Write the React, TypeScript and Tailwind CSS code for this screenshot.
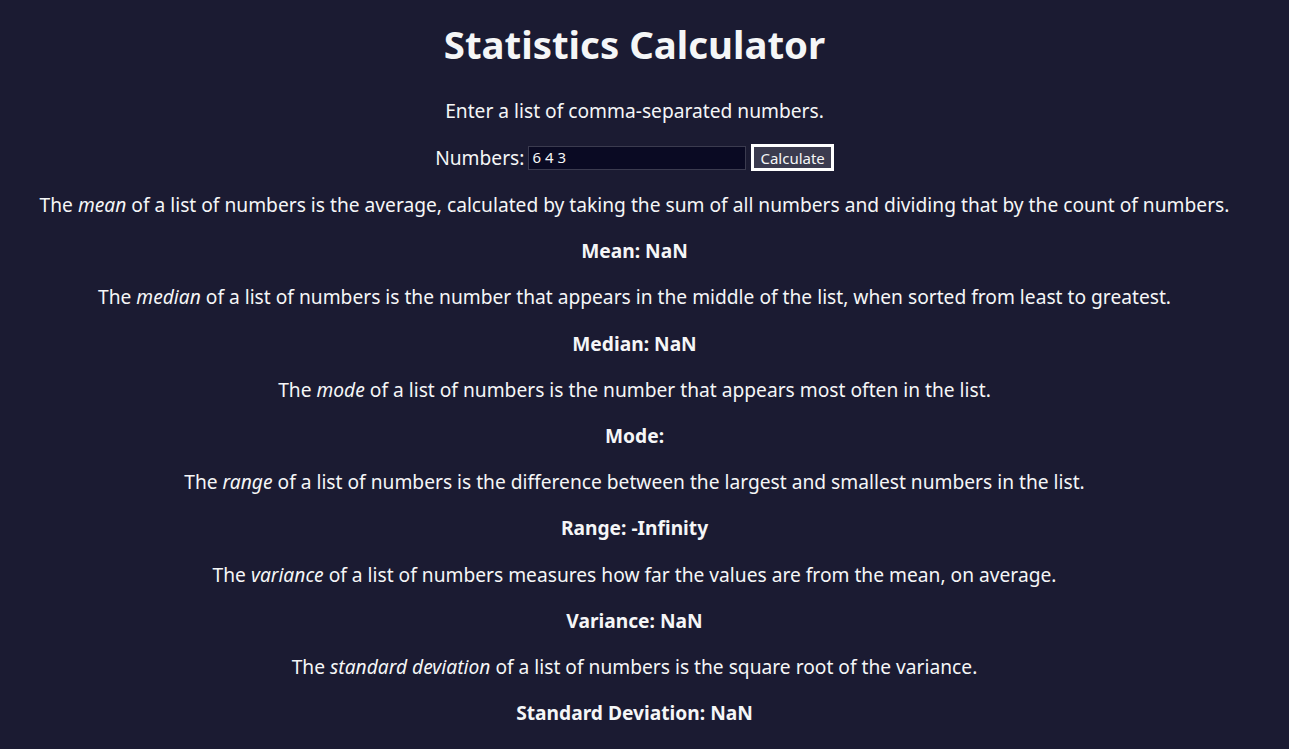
import React, { useState } from 'react';

type Stat = { term: string; before: string; after: string; label: string; value: string };

const STATS: Stat[] = [
  { term: 'mean', before: 'The ', after: ' of a list of numbers is the average, calculated by taking the sum of all numbers and dividing that by the count of numbers.', label: 'Mean', value: 'NaN' },
  { term: 'median', before: 'The ', after: ' of a list of numbers is the number that appears in the middle of the list, when sorted from least to greatest.', label: 'Median', value: 'NaN' },
  { term: 'mode', before: 'The ', after: ' of a list of numbers is the number that appears most often in the list.', label: 'Mode', value: '' },
  { term: 'range', before: 'The ', after: ' of a list of numbers is the difference between the largest and smallest numbers in the list.', label: 'Range', value: '-Infinity' },
  { term: 'variance', before: 'The ', after: ' of a list of numbers measures how far the values are from the mean, on average.', label: 'Variance', value: 'NaN' },
  { term: 'standard deviation', before: 'The ', after: ' of a list of numbers is the square root of the variance.', label: 'Standard Deviation', value: 'NaN' },
];

export default function App() {
  const [nums, setNums] = useState('6 4 3');
  return (
    <div className="min-h-screen pr-[20px] bg-[#1b1b32] text-[#f5f6f7] text-center text-[19.2px] leading-[27px] font-['Noto_Sans',sans-serif]">
      <h1 className="pt-[18px] text-[38.4px] leading-[52px] font-bold">Statistics Calculator</h1>
      <p className="mt-[27px]">Enter a list of comma-separated numbers.</p>
      <form className="mt-[20px] flex items-center justify-center" onSubmit={e => e.preventDefault()}>
        <label htmlFor="numbers">Numbers:</label>
        <input
          id="numbers"
          value={nums}
          onChange={e => setNums(e.target.value)}
          className="ml-[4px] w-[218px] h-[24px] px-[3px] bg-[#0a0a23] border border-[#3b3b4f] text-[15px] text-[#f5f6f7] outline-none"
        />
        <button className="ml-[5px] h-[27px] px-[6px] bg-[#3b3b4f] border-[3px] border-white text-[15px] leading-[18px] text-[#f5f6f7]">Calculate</button>
      </form>
      <div className="mt-[20px] flex flex-col gap-[19.2px]">
        {STATS.map(s => (
          <React.Fragment key={s.term}>
            <p>{s.before}<em>{s.term}</em>{s.after}</p>
            <p className="font-bold">{s.label}: {s.value}</p>
          </React.Fragment>
        ))}
      </div>
    </div>
  );
}
